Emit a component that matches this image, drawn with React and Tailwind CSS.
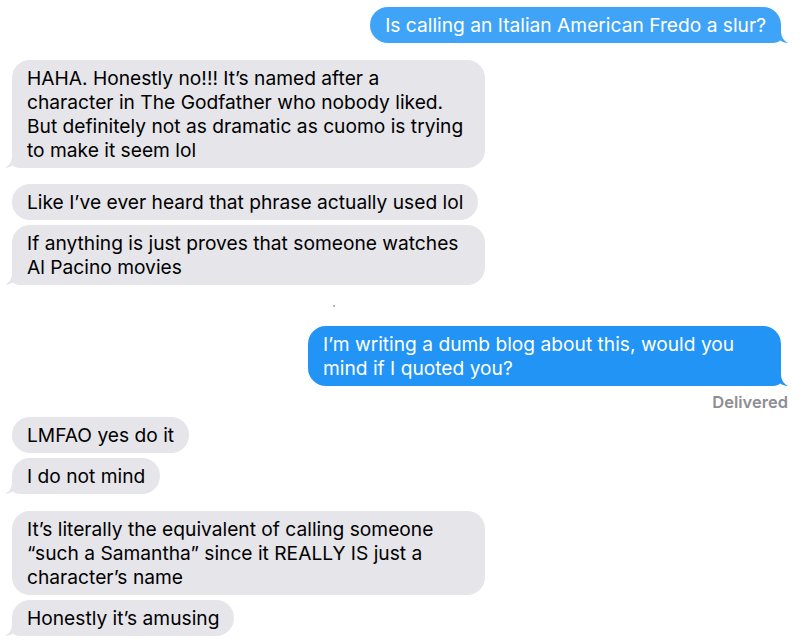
import React from "react";

const TAIL_D =
  "M7 0 L24 0 L24 20 L15 20 C12 20 9.5 19 7.8 17.6 C5.6 19.3 2.8 20 0 20 C4.2 17.8 7 14 7 8 Z";

function Lines({ lines }) {
  return (
    <div className="relative">
      {lines.map((l, i) => (
        <div key={i}>{l}</div>
      ))}
    </div>
  );
}

function Bubble({ tail = false, lines, w }) {
  return (
    <div
      className={
        "relative rounded-[18px] py-[6px] px-[15px] leading-[24px] text-[19.2px] whitespace-nowrap bg-[#e5e5ea] text-black " +
        (w || "w-fit")
      }
    >
      {tail && (
        <svg width="24" height="20" viewBox="0 0 24 20" className="absolute bottom-0 left-[-7px]">
          <path d={TAIL_D} fill="#e5e5ea" />
        </svg>
      )}
      <Lines lines={lines} />
    </div>
  );
}

function SentBubble({ lines, bg, tailColor, w }) {
  return (
    <div
      className={
        "relative rounded-[18px] py-[6px] px-[15px] leading-[24px] text-[19.2px] whitespace-nowrap text-white " +
        bg +
        " " +
        (w || "w-fit")
      }
    >
      <svg
        width="24"
        height="20"
        viewBox="0 0 24 20"
        className="absolute bottom-0 right-[-7px] scale-x-[-1]"
      >
        <path d={TAIL_D} fill={tailColor} />
      </svg>
      <Lines lines={lines} />
    </div>
  );
}

export default function App() {
  return (
    <div className="w-[800px] h-[642px] overflow-hidden bg-white font-['Inter','Liberation_Sans',sans-serif] pt-[7px] px-3 flex flex-col">
      <div className="flex justify-end pr-[7px]">
        <SentBubble
          bg="bg-[#3fa4f8]"
          tailColor="#3fa4f8"
          lines={["Is calling an Italian American Fredo a slur?"]}
        />
      </div>

      <div className="mt-[17px] flex flex-col">
        <Bubble
          tail
          w="w-[473px]"
          lines={[
            "HAHA. Honestly no!!! It’s named after a",
            "character in The Godfather who nobody liked.",
            "But definitely not as dramatic as cuomo is trying",
            "to make it seem lol",
          ]}
        />
      </div>

      <div className="mt-[16px] flex flex-col gap-[5px]">
        <Bubble lines={["Like I’ve ever heard that phrase actually used lol"]} />
        <Bubble
          tail
          w="w-[473px]"
          lines={["If anything is just proves that someone watches", "Al Pacino movies"]}
        />
      </div>

      <div className="h-[41px] flex items-center pl-[321px]">
        <div className="w-[2px] h-[2px] bg-[#b8b8bc]" />
      </div>

      <div className="flex justify-end pr-[7px]">
        <SentBubble
          bg="bg-[#2194f6]"
          tailColor="#2194f6"
          w="w-[473px]"
          lines={["I’m writing a dumb blog about this, would you", "mind if I quoted you?"]}
        />
      </div>
      <div className="mt-[7px] text-right text-[16.5px] leading-[18px] font-semibold text-[#8e8e93]">
        Delivered
      </div>

      <div className="mt-[6px] flex flex-col gap-[5px]">
        <Bubble lines={["LMFAO yes do it"]} />
        <Bubble tail lines={["I do not mind"]} />
      </div>

      <div className="mt-[17px] flex flex-col gap-[5px]">
        <Bubble
          w="w-[473px]"
          lines={[
            "It’s literally the equivalent of calling someone",
            "“such a Samantha” since it REALLY IS just a",
            "character’s name",
          ]}
        />
        <Bubble tail lines={["Honestly it’s amusing"]} />
      </div>
    </div>
  );
}
